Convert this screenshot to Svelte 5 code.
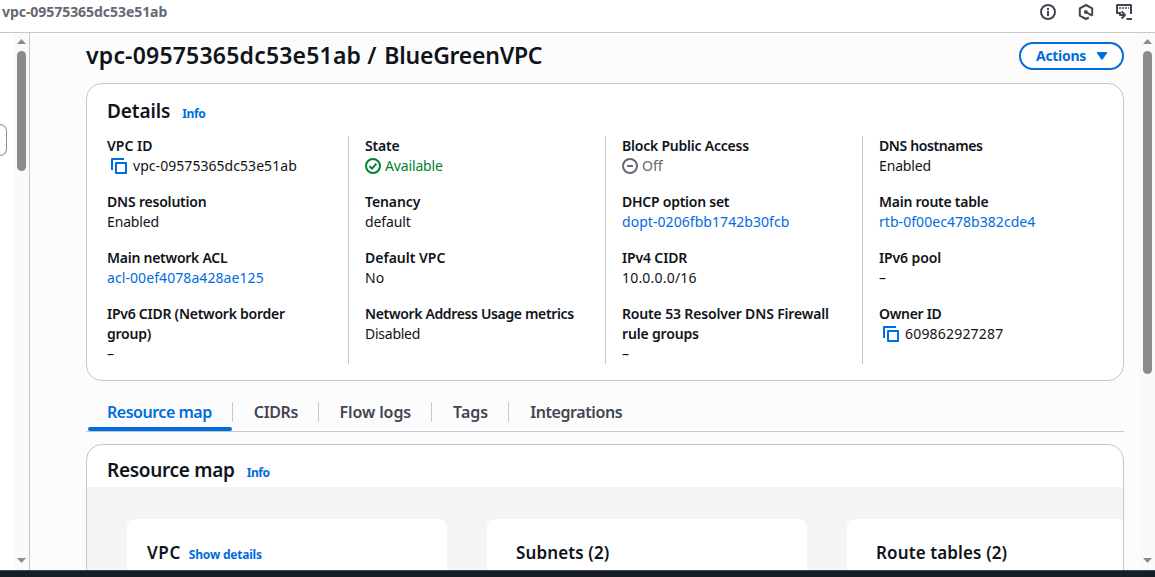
<script>
  // `track` fine-tunes the letter spacing of a label, `valueTrack` that of its value, in pixels.
  const columns = [
    [
      { label: 'VPC ID', value: 'vpc-09575365dc53e51ab', kind: 'copy', valueTrack: 0.05 },
      { label: 'DNS resolution', track: -0.2, value: 'Enabled', valueTrack: -0.15 },
      { label: 'Main network ACL', track: -0.25, value: 'acl-00ef4078a428ae125', kind: 'link', valueTrack: 0.08 },
      { label: 'IPv6 CIDR (Network border group)', track: -0.25, value: '–' }
    ],
    [
      { label: 'State', track: -0.2, value: 'Available', kind: 'ok', valueTrack: -0.15 },
      { label: 'Tenancy', track: -0.1, value: 'default', valueTrack: -0.1 },
      { label: 'Default VPC', value: 'No' },
      { label: 'Network Address Usage metrics', track: -0.35, value: 'Disabled', valueTrack: -0.25 }
    ],
    [
      { label: 'Block Public Access', track: -0.22, value: 'Off', kind: 'off' },
      { label: 'DHCP option set', track: -0.25, value: 'dopt-0206fbb1742b30fcb', kind: 'link', valueTrack: 0.06 },
      { label: 'IPv4 CIDR', track: -0.15, value: '10.0.0.0/16', valueTrack: 0.2 },
      { label: 'Route 53 Resolver DNS Firewall rule groups', track: -0.16, value: '–' }
    ],
    [
      { label: 'DNS hostnames', track: -0.38, value: 'Enabled', valueTrack: -0.15 },
      { label: 'Main route table', track: -0.25, value: 'rtb-0f00ec478b382cde4', kind: 'link', valueTrack: 0.05 },
      { label: 'IPv6 pool', track: -0.12, value: '–' },
      { label: 'Owner ID', track: -0.3, value: '609862927287', kind: 'copy', valueTrack: 0.19 }
    ]
  ];
  const tabs = [
    { name: 'Resource map', track: -0.48 },
    { name: 'CIDRs', track: -0.35 },
    { name: 'Flow logs', track: -0.1 },
    { name: 'Tags', track: 0 },
    { name: 'Integrations', track: -0.42 }
  ];
</script>

{#snippet scrollbar(kind)}
  <div class="scrollbar {kind}">
    <svg width="9" height="5" viewBox="0 0 9 5"><path d="M4.5 0L9 5H0z" fill="#8b8b8b" /></svg>
    <div class="thumb"></div>
    <svg class="down" width="9" height="5" viewBox="0 0 9 5"><path d="M0 0H9L4.5 5z" fill="#8b8b8b" /></svg>
  </div>
{/snippet}

<div class="page">
  <header class="topbar">
    <span class="crumb">vpc-09575365dc53e51ab</span>
    <div class="tools">
      <svg width="16" height="16" viewBox="0 0 16 16" fill="none" stroke="#424650" stroke-width="2">
        <circle cx="8" cy="8" r="7" /><path d="M8 7v5M8 4v2" />
      </svg>
      <svg width="16" height="16" viewBox="0 0 16 16" fill="none" stroke="#424650" stroke-width="2" stroke-linejoin="round">
        <path d="M10.8 13.5L8 15 1.8 11.6V4.4L8 1l6.2 3.4v7.4" /><path d="M8 8l6 3.6" /><circle cx="7.8" cy="8" r="1.9" fill="#424650" stroke="none" />
      </svg>
      <svg width="17" height="16" viewBox="0 0 17 16" fill="none" stroke="#424650" stroke-width="2">
        <path d="M4 9H1V1h14v9M10.5 15H16M4 8v3h4.5M5.6 7.4L9 11l-3.4 3.6" stroke-linejoin="round" />
        <path d="M3 4h2M6 4h2M9 4h2M12 4h1" stroke-width="1.6" />
      </svg>
    </div>
  </header>

  <div class="body">
    <aside class="side">
      <div class="handle"></div>
      {@render scrollbar('left')}
    </aside>

    <main class="content">
      <div class="heading">
        <h1><span class="id">vpc-09575365dc53e51ab</span> / <span class="name">BlueGreenVPC</span></h1>
        <button class="actions">
          <span>Actions</span>
          <svg width="12" height="8" viewBox="0 0 12 8"><path d="M1.6.8h8.8L6 7.2z" fill="#006ce0" stroke="#006ce0" stroke-width="1.4" stroke-linejoin="round" /></svg>
        </button>
      </div>

      <section class="panel details">
        <div class="title"><h2>Details</h2><span class="info">Info</span></div>
        <div class="grid">
          {#each columns as col}
            <dl class="col">
              {#each col as item}
                <div class="item">
                  <dt style:letter-spacing="{item.track ?? 0}px">{item.label}</dt>
                  <dd class={item.kind ?? 'plain'}>
                    {#if item.kind === 'copy'}
                      <svg width="16" height="16" viewBox="0 0 16 16" fill="none" stroke="#006ce0" stroke-width="2">
                        <path d="M1 12V1h12" stroke-linejoin="round" /><rect x="5" y="5" width="10" height="10" stroke-linejoin="round" />
                      </svg>
                    {:else if item.kind === 'ok'}
                      <svg width="16" height="16" viewBox="0 0 16 16" fill="none" stroke="#00802f" stroke-width="2">
                        <circle cx="8" cy="8" r="7" /><path d="M4.6 8.2l2.4 2.4 4.4-5" />
                      </svg>
                    {:else if item.kind === 'off'}
                      <svg width="16" height="16" viewBox="0 0 16 16" fill="none" stroke="#656871" stroke-width="2">
                        <circle cx="8" cy="8" r="7" /><path d="M5 8h6" />
                      </svg>
                    {/if}
                    <span style:letter-spacing="{item.valueTrack ?? 0}px">{item.value}</span>
                  </dd>
                </div>
              {/each}
            </dl>
          {/each}
        </div>
      </section>

      <nav class="tabs">
        {#each tabs as tab, i}
          <div class="tab" class:active={i === 0}><span style:letter-spacing="{tab.track}px">{tab.name}</span></div>
        {/each}
      </nav>

      <section class="panel map">
        <div class="title"><h2>Resource map</h2><span class="info">Info</span></div>
        <div class="canvas">
          <div class="card vpc"><h3>VPC</h3><span class="info">Show details</span></div>
          <div class="card"><h3>Subnets (2)</h3></div>
          <div class="card"><h3>Route tables (2)</h3></div>
        </div>
      </section>
    </main>
    {@render scrollbar('right')}
  </div>
  <footer></footer>
</div>

<style>
  :global(body) { margin: 0; overflow: hidden; }
  .page {
    width: 1155px; height: 577px; display: flex; flex-direction: column; overflow: hidden;
    font: 14px/20px 'Noto Sans', sans-serif; color: #0f141a; background: #fff; box-sizing: border-box;
  }
  .page * { box-sizing: border-box; }
  svg { display: block; flex: none; }
  h1, h2, h3, dl, dd { margin: 0; white-space: nowrap; }
  .topbar { height: 33px; flex: none; border-bottom: 1px solid #c6c6cd; display: flex; justify-content: space-between; padding: 2px 22px 0 2px; }
  .crumb { color: #656871; font-weight: 700; font-size: 14px; letter-spacing: -0.05px; }
  .tools { display: flex; gap: 22px; padding-top: 2px; }
  .body { flex: 1; min-height: 0; display: flex; background: #fcfcfd; }
  .side { width: 30px; flex: none; border-right: 1px solid #c6c6cd; background: #fff; display: flex; justify-content: space-between; }
  .handle { width: 7px; height: 32px; margin-top: 91px; border: 1px solid #8c8c94; border-left: 0; border-radius: 0 8px 8px 0; }
  .scrollbar { width: 15px; flex: none; background: #fafafa; display: flex; flex-direction: column; align-items: center; padding: 6px 0 7px; }
  .thumb { width: 9px; height: 120px; margin-top: 7px; border-radius: 5px; background: #8b8b8b; }
  .right .thumb { height: 323px; }
  .down { margin-top: auto; }
  .content { flex: 1; min-width: 0; padding: 9px 16px 0 56px; overflow: hidden; }
  .heading { display: flex; justify-content: space-between; height: 41px; align-items: flex-start; }
  h1 { font-size: 23px; line-height: 26px; font-weight: 600; }
  h1 .id { letter-spacing: 0.2px; }
  h1 .name { letter-spacing: -0.25px; margin-left: 2px; }
  .actions {
    width: 105px; height: 28px; border: 2px solid #006ce0; border-radius: 14px; background: #fff; color: #006ce0;
    font: 700 14px/20px 'Noto Sans', sans-serif; letter-spacing: -0.3px; padding: 0 14px 0 15px; display: flex; align-items: center; justify-content: space-between;
  }
  .panel { border: 1px solid #c6c6cd; border-radius: 16px; background: #fff; overflow: hidden; }
  .details { height: 298px; padding: 15px 4px 0; }
  .title { display: flex; align-items: baseline; gap: 12px; }
  .details .title { padding-left: 16px; height: 37px; }
  h2 { font-size: 19px; line-height: 24px; font-weight: 600; letter-spacing: -0.1px; }
  .map h2 { letter-spacing: -0.3px; }
  .info { color: #006ce0; font-size: 12px; line-height: 16px; font-weight: 700; letter-spacing: -0.4px; }
  .grid { display: grid; grid-template-columns: repeat(4, 257px); height: 228px; }
  .col { display: flex; flex-direction: column; gap: 16px; padding: 0 16px; border-left: 1px solid #c6c6cd; }
  .col:first-child { border-left: 0; }
  dt { font-weight: 600; white-space: normal; }
  dd { display: flex; align-items: center; gap: 4px; }
  .copy { padding-left: 4px; gap: 6px; }
  .link { color: #006ce0; }
  .ok { color: #00802f; }
  .off { color: #656871; }
  .tabs { display: flex; height: 51px; padding: 10px 0 0 2px; border-bottom: 1px solid #c6c6cd; align-items: stretch; }
  .tab { font-size: 16px; font-weight: 600; color: #424650; position: relative; padding: 11px 20px 0 22px; white-space: nowrap; }
  .tab:first-child { padding-left: 19px; }
  .tab:nth-child(3) { padding-left: 21.5px; }
  .tab:not(:last-child)::after { content: ''; position: absolute; right: -1px; top: 11px; height: 20px; width: 1px; background: #c6c6cd; }
  .tab.active { color: #006ce0; }
  .tab.active::before { content: ''; position: absolute; left: 0; right: 0; bottom: 0; height: 4px; border-radius: 2px; background: #006ce0; }
  .map { margin-top: 12px; height: 200px; }
  .map .title { height: 42px; padding: 13px 0 0 20px; }
  .canvas { background: #f4f4f7; height: 160px; padding: 32px 0 0 40px; display: flex; gap: 40px; }
  .card { width: 320px; flex: none; height: 140px; border-radius: 8px; background: #fff; padding: 22px 0 0 29px; display: flex; align-items: baseline; gap: 7px; }
  .vpc { padding-left: 20px; gap: 8px; }
  .vpc .info { letter-spacing: -0.2px; }
  h3 { font-size: 17px; line-height: 24px; font-weight: 600; letter-spacing: 0.12px; }
  .vpc h3 { letter-spacing: 0.6px; }
  footer { height: 7px; flex: none; background: #161d26; border-top: 1px solid #424650; }
</style>
